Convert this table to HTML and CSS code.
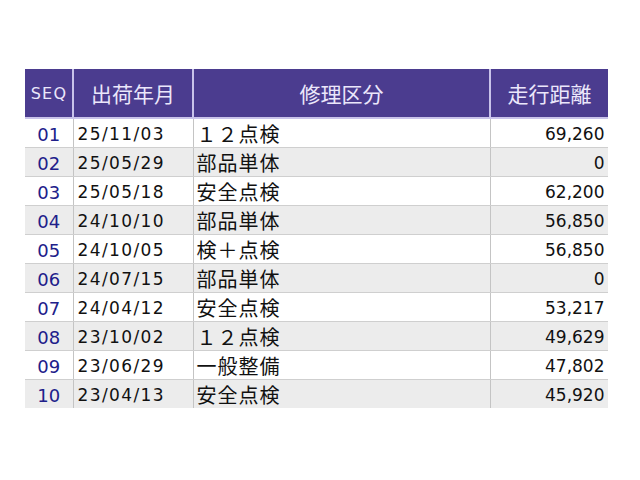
FILE: index.html
```html
<!DOCTYPE html>
<html lang="ja">
<head>
<meta charset="utf-8">
<link rel="stylesheet" href="styles.css">
</head>
<body>
<div class="frame">
  <table class="list">
    <colgroup>
      <col class="c-seq"><col class="c-date"><col class="c-kind"><col class="c-dist">
    </colgroup>
    <thead>
      <tr><th class="seqh">SEQ</th><th>出荷年月</th><th>修理区分</th><th>走行距離</th></tr>
    </thead>
    <tbody>
      <tr><td class="seq">01</td><td class="date">25/11/03</td><td class="kind">１２点検</td><td class="num">69,260</td></tr>
      <tr class="alt"><td class="seq">02</td><td class="date">25/05/29</td><td class="kind">部品単体</td><td class="num">0</td></tr>
      <tr><td class="seq">03</td><td class="date">25/05/18</td><td class="kind">安全点検</td><td class="num">62,200</td></tr>
      <tr class="alt"><td class="seq">04</td><td class="date">24/10/10</td><td class="kind">部品単体</td><td class="num">56,850</td></tr>
      <tr><td class="seq">05</td><td class="date">24/10/05</td><td class="kind">検＋点検</td><td class="num">56,850</td></tr>
      <tr class="alt"><td class="seq">06</td><td class="date">24/07/15</td><td class="kind">部品単体</td><td class="num">0</td></tr>
      <tr><td class="seq">07</td><td class="date">24/04/12</td><td class="kind">安全点検</td><td class="num">53,217</td></tr>
      <tr class="alt"><td class="seq">08</td><td class="date">23/10/02</td><td class="kind">１２点検</td><td class="num">49,629</td></tr>
      <tr><td class="seq">09</td><td class="date">23/06/29</td><td class="kind">一般整備</td><td class="num">47,802</td></tr>
      <tr class="alt"><td class="seq">10</td><td class="date">23/04/13</td><td class="kind">安全点検</td><td class="num">45,920</td></tr>
    </tbody>
  </table>
</div>
</body>
</html>
```

FILE: styles.css
```css
html, body {
  margin: 0;
  padding: 0;
  background: #ffffff;
}
body {
  padding: 69px 0 0 25px;
  font-family: "DejaVu Sans", "Noto Sans CJK JP", sans-serif;
}
.frame {
  width: 583px;
  height: 339px;
  overflow: hidden;
}
.list {
  width: 583px;
  border-collapse: collapse;
  table-layout: fixed;
}
.c-seq { width: 48px; }
.c-date { width: 120px; }
.c-kind { width: 297px; }
.c-dist { width: 118px; }
th {
  height: 48px;
  padding: 0;
  background: #4b3c8f;
  color: #ebe7fb;
  font-family: "Noto Sans CJK JP", sans-serif;
  font-weight: normal;
  font-size: 21px;
  text-align: center;
  border-right: 2px solid #c9c3ea;
  border-bottom: 2px solid #c9c3ea;
}
th:last-child { border-right: none; }
th.seqh {
  font-family: "DejaVu Sans", sans-serif;
  font-size: 16px;
  letter-spacing: 1.2px;
  padding-left: 1px;
}
td {
  height: 25px;
  padding: 3px 3px 0;
  font-size: 17px;
  color: #111111;
  border-bottom: 1px solid #cfcfcf;
  border-right: 1px solid #c4c4c4;
  white-space: nowrap;
  line-height: 25px;
  vertical-align: top;
}
tr.alt td { background: #ececec; }
td.seq {
  text-align: center;
  color: #20208a;
  font-size: 18px;
  padding-left: 0;
  padding-right: 0;
}
td.date {
  padding-left: 4px;
  letter-spacing: 1.4px;
}
td.kind {
  font-family: "Noto Sans CJK JP", sans-serif;
  font-size: 20px;
  line-height: 27px;
  height: 27px;
  padding-top: 1px;
  padding-left: 3px;
  letter-spacing: 1px;
}
td.num { text-align: right; }
```
